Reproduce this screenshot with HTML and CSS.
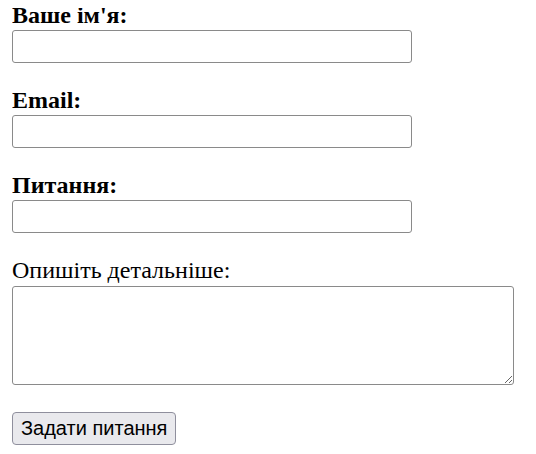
FILE: index.html
```html
<!DOCTYPE html>
<html lang="uk">
<head>
<meta charset="utf-8">
<title>Задати питання</title>
<link rel="stylesheet" href="styles.css">
</head>
<body>
<form class="form">
  <div class="field">
    <label class="label label-bold" for="name">Ваше ім'я:</label>
    <input class="input" id="name" type="text">
  </div>
  <div class="field">
    <label class="label label-bold" for="email">Email:</label>
    <input class="input" id="email" type="email">
  </div>
  <div class="field">
    <label class="label label-bold" for="question">Питання:</label>
    <input class="input" id="question" type="text">
  </div>
  <div class="field field-last">
    <label class="label" for="details">Опишіть детальніше:</label>
    <textarea class="textarea" id="details"></textarea>
  </div>
  <div class="actions">
    <button class="button" type="submit">Задати питання</button>
  </div>
</form>
</body>
</html>
```

FILE: styles.css
```css
html, body {
  background: #ffffff;
}
body {
  margin: 8px 12px;
  font-family: "Liberation Serif", "Times New Roman", serif;
  color: #000;
}
.form {
  display: flex;
  flex-direction: column;
  align-items: flex-start;
}
.field {
  display: flex;
  flex-direction: column;
  align-items: flex-start;
  margin-bottom: 30px;
}
.field-last {
  margin-bottom: 27px;
}
.label {
  font-size: 24px;
  line-height: 15px;
  margin-bottom: 7px;
  font-weight: normal;
}
.label-bold {
  font-weight: bold;
}
.input {
  box-sizing: border-box;
  width: 400px;
  height: 33px;
  margin: 0;
  padding: 2px 4px;
  border: 1px solid #8a8a8a;
  border-radius: 3px;
  background: #fff;
  font-size: 18px;
}
.textarea {
  box-sizing: border-box;
  width: 502px;
  height: 99px;
  margin: 1px 0 0;
  padding: 2px;
  border: 1px solid #8a8a8a;
  border-radius: 3px;
  background: #fff;
  font-size: 18px;
  resize: both;
}
.button {
  box-sizing: border-box;
  height: 33px;
  padding: 0 8px;
  margin: 0;
  border: 1px solid #8f8f9d;
  border-radius: 4px;
  background: #e9e9ed;
  font-family: "Liberation Sans", Arial, sans-serif;
  font-size: 20px;
  color: #000;
}
```
